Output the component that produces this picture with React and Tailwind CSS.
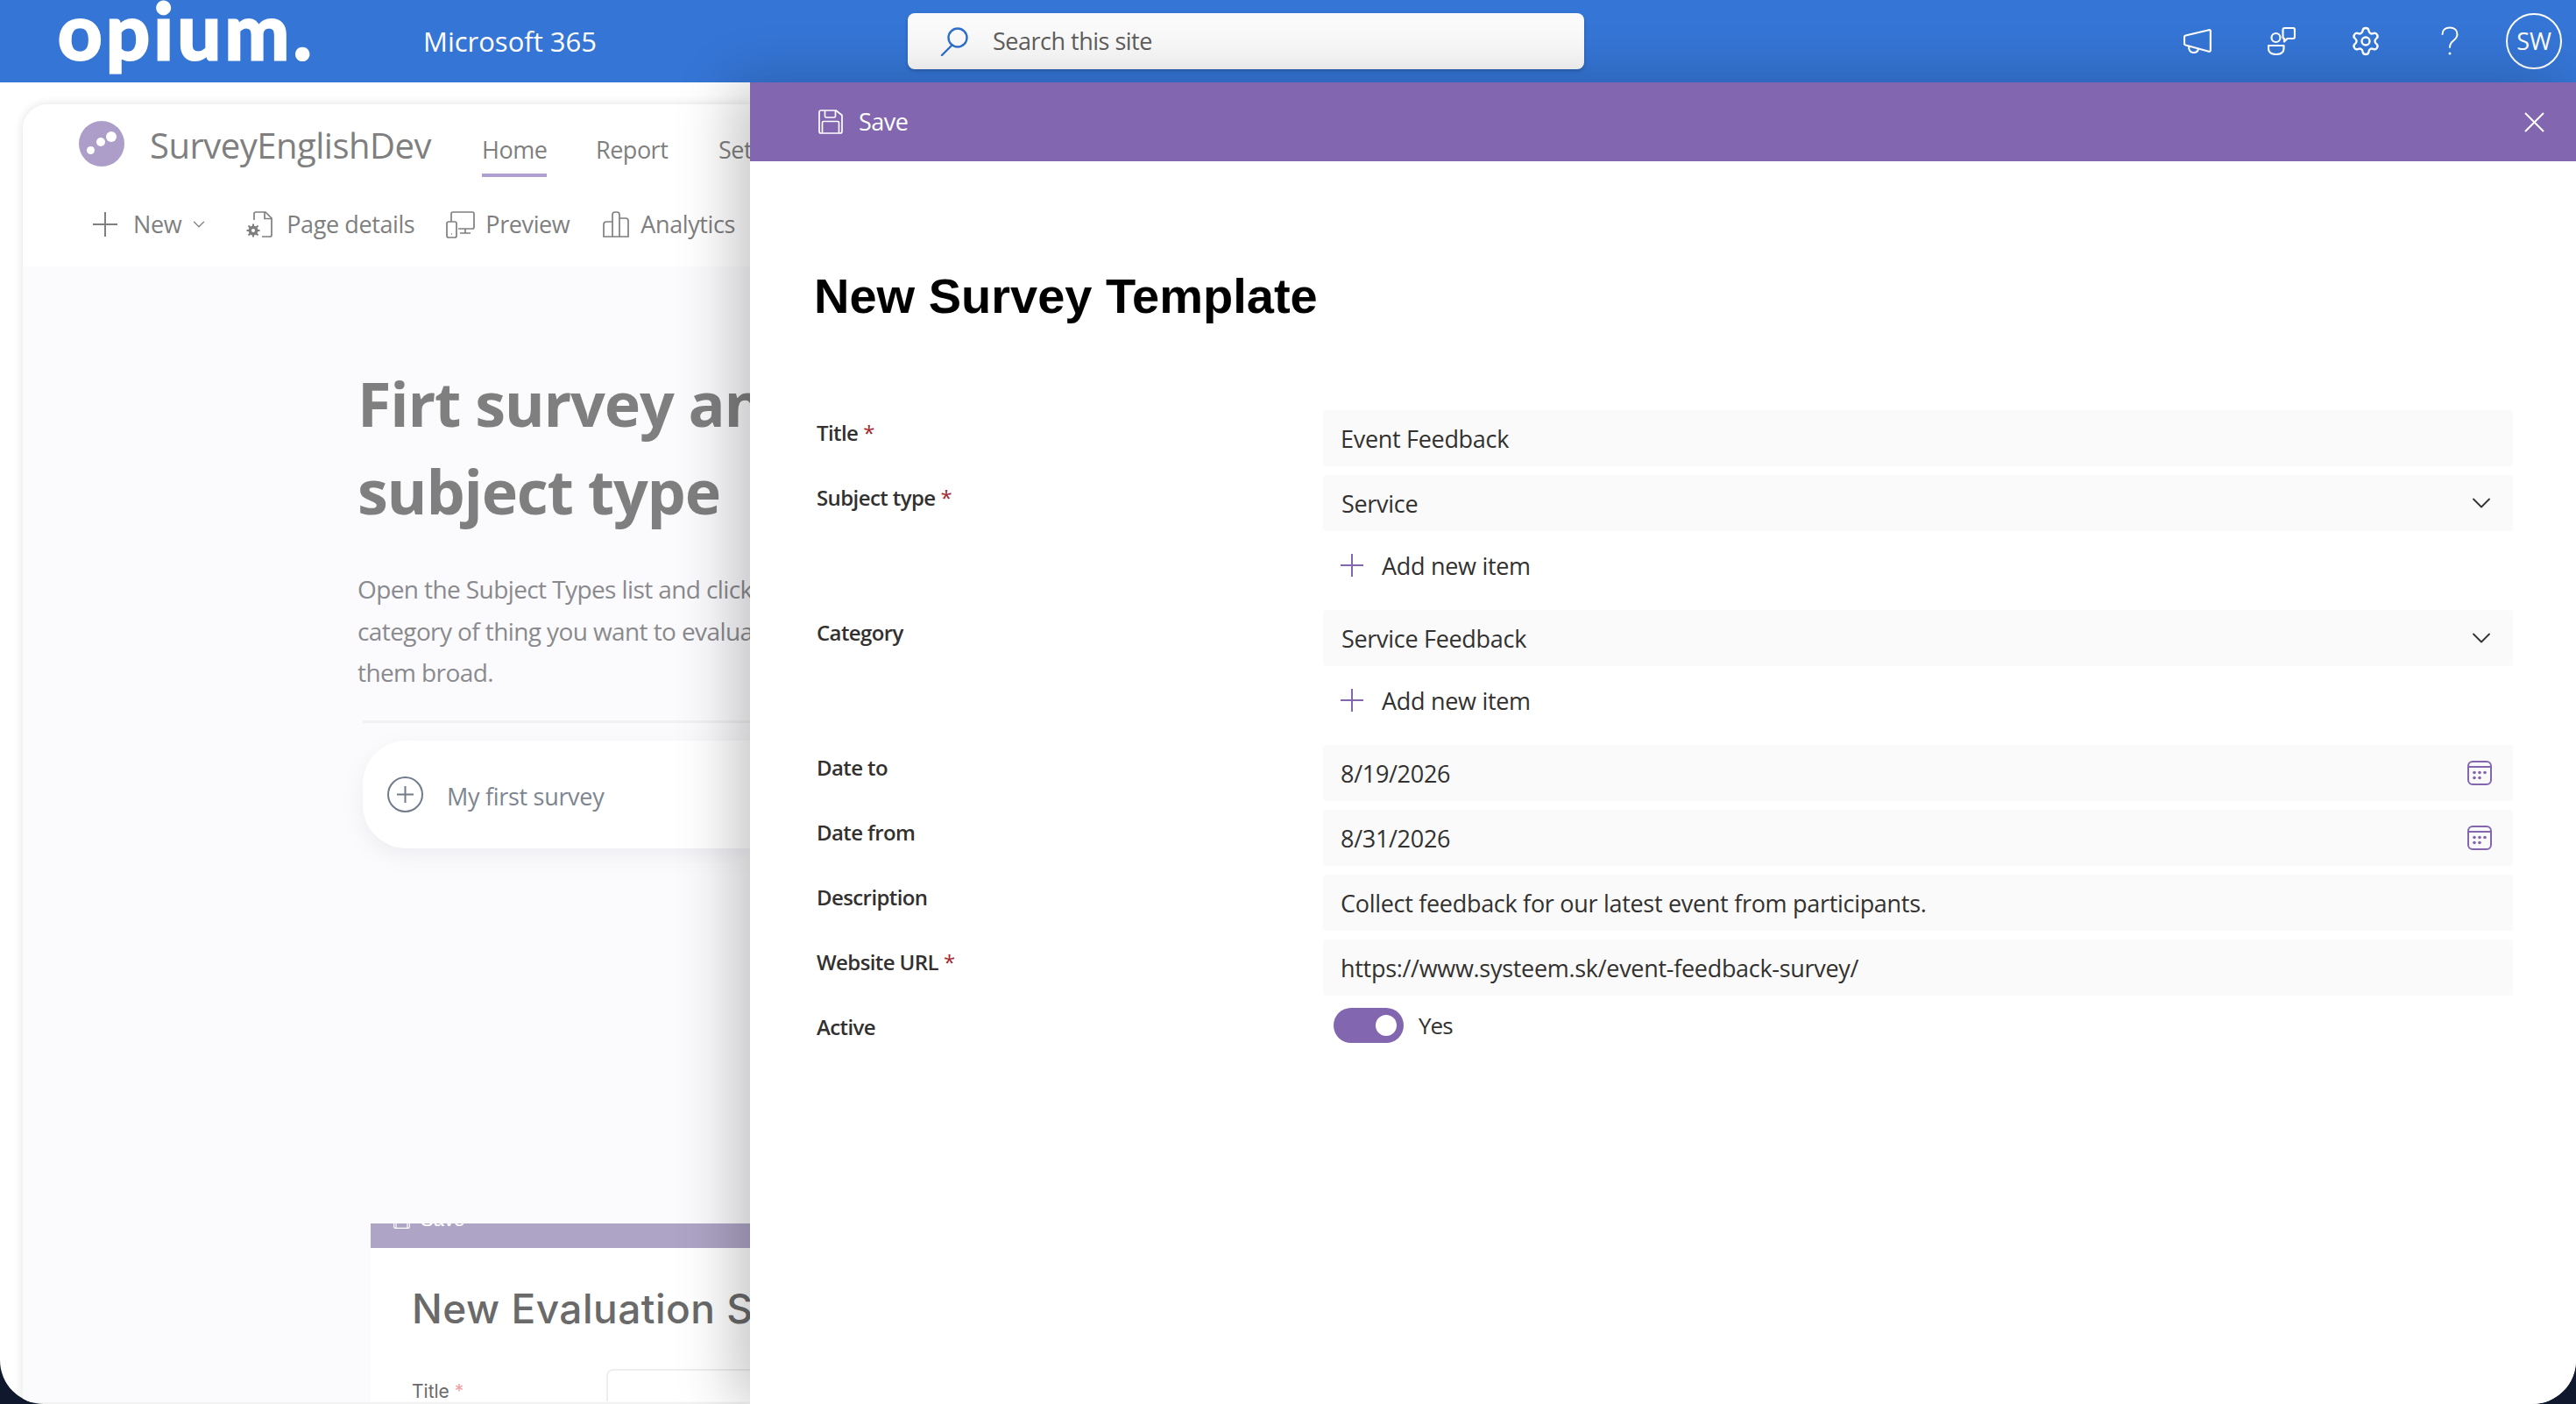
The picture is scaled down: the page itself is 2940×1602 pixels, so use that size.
import React from 'react';
import { ChevronDown, Settings } from 'lucide-react';

const seg = "font-['Open_Sans',sans-serif]";

const MegaphoneIcon = () => (
  <svg width="32" height="28" viewBox="0 0 32 28" fill="none" stroke="white" strokeWidth="2.2" strokeLinejoin="round">
    <path d="M2.500 7.500 29 1.200c1.200-.3 1.900.4 1.900 1.500v21.500c0 1.100-.8 1.800-1.900 1.500L2.500 18.500c-1-.3-1.500-1-1.500-2v-7c0-1 .5-1.700 1.500-2z" />
    <path d="M6 20c0 4 2 7 5.500 7 3 0 5-1.500 5.500-4" />
  </svg>
);

const ContactIcon = () => (
  <svg width="32" height="32" viewBox="0 0 32 32" fill="none" stroke="white" strokeWidth="2.2" strokeLinejoin="round">
    <circle cx="9.500" cy="12" r="5" />
    <path d="M1 21h17.500v3.500c0 4-3.500 6.500-8.750 6.500S1 28.500 1 24.500z" />
    <path d="M17.500 3c0-1.200.8-2 2-2H29c1.200 0 2 .8 2 2v8c0 1.200-.8 2-2 2h-6.500L19 16.500V13c-1 0-1.500-.8-1.500-2z" />
  </svg>
);

const HelpIcon = () => (
  <svg width="20" height="34" viewBox="0 0 20 34" fill="none" stroke="white" strokeWidth="2" strokeLinecap="round">
    <path d="M1.500 9C1.500 4.500 5 1.500 10 1.500s8.500 3 8.500 7.500c0 3.500-2 5.500-4.500 7.500-2.500 2-4 3.500-4 7.500" />
    <circle cx="10" cy="31" r="1.500" fill="white" stroke="none" />
  </svg>
);

const CloseIcon = () => (
  <svg width="23" height="23" viewBox="0 0 23 23" stroke="white" strokeWidth="2">
    <path d="M1 1l21 21M22 1 1 22" />
  </svg>
);

const SaveIcon = ({ className = '' }) => (
  <svg className={className} viewBox="0 0 28 28" fill="none" stroke="currentColor" strokeWidth="1.7" strokeLinejoin="round">
    <path d="M3 1h17l7 5.500V25c0 1.200-.8 2-2 2H3c-1.200 0-2-.8-2-2V3c0-1.200.8-2 2-2z" />
    <path d="M7.500 1v6.500c0 1 .5 1.500 1.500 1.500h9c1 0 1.500-.5 1.500-1.500V1" />
    <path d="M4.500 27V15c0-1 .5-1.500 1.500-1.500h16c1 0 1.500.5 1.500 1.500v12" />
  </svg>
);

const CalendarIcon = () => (
  <svg width="28" height="28" viewBox="0 0 28 28" fill="none" stroke="#8366b0" strokeWidth="2">
    <rect x="1" y="1" width="26" height="26" rx="5" />
    <path d="M1 7h26" />
    <g fill="#8366b0" stroke="none">
      <circle cx="8" cy="13.500" r="1.800" />
      <circle cx="14" cy="13.500" r="1.800" />
      <circle cx="20" cy="13.500" r="1.800" />
      <circle cx="8" cy="19.500" r="1.800" />
      <circle cx="14" cy="19.500" r="1.800" />
    </g>
  </svg>
);

const PageDetailsIcon = () => (
  <svg width="32" height="32" viewBox="0 0 32 32" fill="none" stroke="#7f7f7f" strokeWidth="1.7">
    <path d="M10 11V4c0-1.200.8-2 2-2h11l7 7v19c0 1.200-.8 2-2 2h-9" strokeLinejoin="round" />
    <path d="M22 2v7.500h8" />
    <circle cx="9" cy="23" r="5.500" fill="#7f7f7f" stroke="none" />
    <path d="M9 15.500v15M1.500 23h15M3.500 17.500l11 11M14.500 17.500l-11 11" strokeWidth="2" />
    <circle cx="9" cy="23" r="2" fill="white" stroke="none" />
  </svg>
);

const PreviewIcon = () => (
  <svg width="34" height="32" viewBox="0 0 34 32" fill="none" stroke="#7f7f7f" strokeWidth="1.7">
    <path d="M6 13V4c0-1.200.8-2 2-2h22c1.200 0 2 .8 2 2v15c0 1.200-.8 2-2 2H14" />
    <rect x="1" y="13" width="11" height="18" rx="2" />
    <path d="M6 27h1M22 21v5M16 26h12" />
  </svg>
);

const AnalyticsIcon = () => (
  <svg width="30" height="32" viewBox="0 0 30 32" fill="none" stroke="#7f7f7f" strokeWidth="1.7">
    <path d="M11 30V5c0-1.500 1-3 3-3h2c2 0 3 1.500 3 3v25" />
    <path d="M11 13H4c-1.500 0-3 1-3 3v14h28V12c0-1.500-1-3-3-3h-7" />
  </svg>
);

const SearchIcon = () => (
  <svg width="34" height="34" viewBox="0 0 34 34" fill="none" stroke="#2f6fcb" strokeWidth="2.4" strokeLinecap="round">
    <circle cx="21" cy="13" r="10.500" />
    <path d="M14.500 21.500 3 33" />
  </svg>
);

// label + field row of the form
const Row = ({ label, required, children, labelTop = 'pt-[14px]' }) => (
  <div className="flex">
    <div className={`w-[654px] shrink-0 pl-[76px] ${labelTop} text-[24px] leading-[24px] font-semibold text-[#323130] tracking-[-0.6px] ${seg}`}>
      {label}
      {required && <span className="ml-[6px] text-[#a4262c] font-normal">*</span>}
    </div>
    <div className="flex-1">{children}</div>
  </div>
);

const Field = ({ value, icon, textClass = 'pl-[20px]' }) => (
  <div className={`flex h-[64px] items-center justify-between rounded-[4px] bg-[#fafafa] pr-[24px] ${textClass}`}>
    <span className={`mt-[2px] text-[27px] text-[#323130] tracking-[-0.3px] ${seg}`}>{value}</span>
    {icon}
  </div>
);

const AddNew = () => (
  <div className="flex h-[90px] items-center pb-[12px] pl-[20px]">
    <svg width="26" height="26" viewBox="0 0 26 26" stroke="#8366b0" strokeWidth="2">
      <path d="M13 0v26M0 13h26" />
    </svg>
    <span className={`ml-[21px] mt-[3px] text-[27px] text-[#323130] tracking-[-0.3px] ${seg}`}>Add new item</span>
  </div>
);

const chevron = (
  <ChevronDown size={36} strokeWidth={1.2} className="mr-[-6px] text-[#323130]" />
);

export default function App() {
  return (
    <div className="h-[1602px] w-[2940px] bg-[#10182e]">
      <div className="relative flex h-full flex-col overflow-hidden rounded-b-[50px] bg-white">
        {/* Suite bar */}
        <header className="flex h-[94px] shrink-0 items-center bg-[#3575d5] text-white">
          <div className="mb-[26px] w-[483px] shrink-0 pl-[66px]">
            <span className="block font-['Lato',sans-serif] text-[88px] leading-[94px] font-bold tracking-[4.5px] [-webkit-text-stroke:3px_white]">opium.</span>
          </div>
          <span className={`w-[553px] text-[31px] ${seg}`}>Microsoft 365</span>
          <div className="flex h-[64px] w-[772px] items-center rounded-[8px] bg-[#fafafa] pl-[36px] shadow-[0_2px_4px_rgba(0,0,0,0.2)]">
            <SearchIcon />
            <span className={`ml-[27px] text-[27px] text-[#605e5c] tracking-[-0.5px] ${seg}`}>Search this site</span>
          </div>
          <div className="ml-auto flex items-center pr-[16px]">
            <div className="flex w-[96px] justify-center"><MegaphoneIcon /></div>
            <div className="flex w-[96px] justify-center"><ContactIcon /></div>
            <div className="flex w-[96px] justify-center"><Settings size={36} strokeWidth={1.6} /></div>
            <div className="flex w-[96px] justify-center"><HelpIcon /></div>
            <div className={`ml-[16px] flex h-[64px] w-[64px] items-center justify-center rounded-full border-2 border-white text-[27px] ${seg}`}>SW</div>
          </div>
        </header>

        {/* SharePoint page behind the panel */}
        <main className="flex-1 overflow-hidden pb-[2px] pl-[26px] pt-[25px]">
          <div className="h-full w-[830px] overflow-hidden rounded-tl-[28px] bg-[#fbfbfd] shadow-[0_0_12px_rgba(0,0,0,0.12)]">
            <div className="h-[185px] bg-white pl-[64px]">
              <div className="flex h-[100px] items-start pt-[19px]">
                <div className="relative h-[52px] w-[52px] shrink-0 rounded-full bg-[#ad9ec9]">
                  <span className="absolute left-[9px] top-[29px] h-[9px] w-[9px] rounded-full bg-white" />
                  <span className="absolute left-[20px] top-[19px] h-[10px] w-[10px] rounded-full bg-white" />
                  <span className="absolute left-[31px] top-[12px] h-[12px] w-[12px] rounded-full bg-white" />
                </div>
                <span className={`ml-[29px] shrink-0 text-[40px] leading-[56px] text-[#7f7f7f] tracking-[-0.5px] ${seg}`}>SurveyEnglishDev</span>
                <div className={`ml-[58px] mt-[13px] flex items-start text-[27px] leading-[40px] text-[#7f7f7f] tracking-[-0.5px] ${seg}`}>
                  <span className="w-[130px] shrink-0">
                    <span className="block w-fit border-b-4 border-[#af9fcf] pb-[7px]">Home</span>
                  </span>
                  <span className="w-[140px] shrink-0">Report</span>
                  <span>Settings</span>
                </div>
              </div>
              <div className={`flex h-[74px] items-center pl-[16px] text-[27px] text-[#7f7f7f] tracking-[-0.4px] ${seg}`}>
                <svg width="28" height="28" viewBox="0 0 28 28" stroke="#7f7f7f" strokeWidth="2">
                  <path d="M14 0v28M0 14h28" />
                </svg>
                <span className="ml-[18px]">New</span>
                <ChevronDown size={22} strokeWidth={1.4} className="ml-[9px]" />
                <div className="ml-[42px]"><PageDetailsIcon /></div>
                <span className="ml-[15px]">Page details</span>
                <div className="ml-[36px]"><PreviewIcon /></div>
                <span className="ml-[11px]">Preview</span>
                <div className="ml-[38px]"><AnalyticsIcon /></div>
                <span className="ml-[13px]">Analytics</span>
              </div>
            </div>

            <div className="overflow-hidden pl-[382px] pt-[106px]">
              <h1 className={`whitespace-nowrap text-[70px] leading-[100px] font-bold text-[#7f7f7f] tracking-[-1.2px] ${seg}`}>
                Firt survey and
                <br />
                subject type
              </h1>
              <p className={`mt-[39px] whitespace-pre text-[28px] leading-[47.5px] text-[#8a8a8e] tracking-[-0.6px] ${seg}`}>
                {'Open the Subject Types list and click\ncategory of thing you want to evaluate\nthem broad.'}
              </p>
              <div className="ml-[6px] mt-[30px] h-[3px] bg-[#f1f1f2]" />
              <div className="ml-[6px] mt-[20px] flex h-[123px] items-center rounded-l-[50px] bg-white pl-[28px] shadow-[0_8px_24px_rgba(120,120,150,0.1)]">
                <svg width="41" height="41" viewBox="0 0 41 41" fill="none" stroke="#717b8a" strokeWidth="2">
                  <circle cx="20.500" cy="20.500" r="19.500" />
                  <path d="M20.500 11v19M11 20.500h19" />
                </svg>
                <span className={`ml-[27px] mt-[6px] text-[27px] text-[#7d8590] tracking-[-0.3px] ${seg}`}>My first survey</span>
              </div>
              <div className="ml-[15px] mt-[428px] h-[203px] bg-white">
                <div className="flex h-[28px] items-start overflow-hidden bg-[#aea5c6] pl-[26px] text-white">
                  <SaveIcon className="mt-[-13px] h-[19px] w-[19px]" />
                  <span className="ml-[12px] mt-[-15px] font-['Liberation_Sans',sans-serif] text-[22px] leading-[22px]">Save</span>
                </div>
                <div className="flex">
                  <div className="w-[269px] shrink-0 pl-[47px] font-['Inter',sans-serif]">
                    <h2 className="mt-[44px] whitespace-nowrap text-[46px] leading-[50px] font-medium tracking-[0.5px] text-[#6a6a6a]">New Evaluation Survey</h2>
                    <div className="mt-[58px] text-[21px] leading-[24px] text-[#6a6a6a]">
                      Title <span className="text-[#f5a0a0]">*</span>
                    </div>
                  </div>
                  <div className="mt-[138px] h-[60px] flex-1 rounded-tl-[8px] border-l-2 border-t-2 border-[#eeeeef]" />
                </div>
              </div>
            </div>
          </div>
        </main>

        {/* Side panel */}
        <aside className="absolute bottom-0 left-[856px] right-0 top-[94px] bg-white shadow-[-20px_0_60px_rgba(0,0,0,0.22)]">
          <div className="flex h-[90px] items-center justify-between bg-[#8366b0] pl-[78px] pr-[36px] text-white">
            <div className="flex items-center">
              <SaveIcon className="h-[28px] w-[28px]" />
              <span className={`ml-[18px] text-[27px] tracking-[-0.5px] ${seg}`}>Save</span>
            </div>
            <CloseIcon />
          </div>
          <div className="pr-[72px]">
            <h1 className="pl-[73px] pt-[120px] font-['Liberation_Sans',sans-serif] text-[56px] leading-[68px] font-bold text-black">New Survey Template</h1>
            <div className="mt-[96px]">
              <Row label="Title" required><Field value="Event Feedback" /></Row>
              <div className="mt-[10px]">
                <Row label="Subject type" required>
                  <Field value="Service" textClass="pl-[21px]" icon={chevron} />
                  <AddNew />
                </Row>
              </div>
              <Row label="Category">
                <Field value="Service Feedback" textClass="pl-[21px]" icon={chevron} />
                <AddNew />
              </Row>
              <div className="flex flex-col gap-[10px]">
                <Row label="Date to"><Field value="8/19/2026" icon={<CalendarIcon />} /></Row>
                <Row label="Date from"><Field value="8/31/2026" icon={<CalendarIcon />} /></Row>
                <Row label="Description"><Field value="Collect feedback for our latest event from participants." /></Row>
                <Row label="Website URL" required><Field value="https://www.systeem.sk/event-feedback-survey/" /></Row>
              </div>
              <Row label="Active" labelTop="pt-[24px]">
                <div className="flex items-center pl-[12px] pt-[14px]">
                  <div className="flex h-[40px] w-[80px] items-center justify-end rounded-full bg-[#8366b0] pr-[8px]">
                    <div className="h-[24px] w-[24px] rounded-full bg-white" />
                  </div>
                  <span className={`ml-[17px] text-[26px] text-[#323130] tracking-[-1px] ${seg}`}>Yes</span>
                </div>
              </Row>
            </div>
          </div>
        </aside>
      </div>
    </div>
  );
}
